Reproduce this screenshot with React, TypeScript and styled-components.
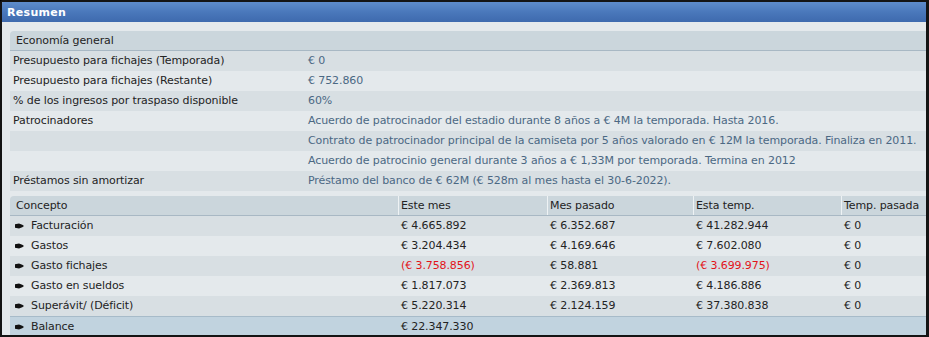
import { ReactElement } from "react";
import styled, { createGlobalStyle } from "styled-components";

const GlobalStyle = createGlobalStyle`
  html, body {
    margin: 0;
    padding: 0;
    background: #000;
  }
  * {
    box-sizing: border-box;
  }
`;

const Window = styled.div`
  width: 929px;
  height: 337px;
  overflow: hidden;
  background: #e4e9ec;
  border: 2px solid #141414;
  border-right-width: 3px;
  border-top-left-radius: 3px;
  font-family: "DejaVu Sans", Verdana, sans-serif;
  font-size: 11px;
  letter-spacing: -0.1px;
  color: #232323;
`;

const TitleBar = styled.div`
  height: 20px;
  line-height: 21px;
  padding-left: 5px;
  background: linear-gradient(to bottom, #5e8ccb 0%, #4a78bb 50%, #3e6aae 100%);
  color: #ffffff;
  font-size: 11px;
  font-weight: bold;
  letter-spacing: 0.3px;
`;

const Content = styled.div`
  padding: 9px 0 0 8px;
  display: flex;
  flex-direction: column;
  gap: 5px;
`;

const Panel = styled.div`
  display: flex;
  flex-direction: column;
`;

const PanelHeader = styled.div<{ $cols: string }>`
  display: grid;
  grid-template-columns: ${(p) => p.$cols};
  height: 20px;
  line-height: 19px;
  background: #cbd6dc;
  border-bottom: 1px solid #a8b8c4;
  border-top-left-radius: 4px;
`;

const HeaderCell = styled.div<{ $sep?: boolean }>`
  padding-left: ${(p) => (p.$sep ? "2px" : "6px")};
  border-left: ${(p) => (p.$sep ? "1px solid #eef2f4" : "none")};
  white-space: nowrap;
  overflow: hidden;
`;

const Row = styled.div<{ $cols: string; $shade: "dark" | "light" | "total" }>`
  display: grid;
  grid-template-columns: ${(p) => p.$cols};
  height: 20px;
  line-height: 20px;
  background: ${(p) =>
    p.$shade === "dark" ? "#d8dfe3" : p.$shade === "total" ? "#c1d3df" : "#e4e9ec"};
  border-top: ${(p) => (p.$shade === "total" ? "1px solid #a7bbc9" : "none")};
`;

const Label = styled.div`
  padding-left: 3px;
  white-space: nowrap;
  color: #232323;
`;

const InfoValue = styled.div`
  padding-left: 3px;
  white-space: nowrap;
  color: #4b6883;
`;

const Concept = styled.div`
  display: flex;
  align-items: center;
  gap: 7px;
  padding-left: 5px;
  white-space: nowrap;
`;

const Amount = styled.div<{ $neg?: boolean }>`
  padding-left: 3px;
  white-space: nowrap;
  color: ${(p) => (p.$neg ? "#e2141a" : "#232323")};
`;

const Bullet = () => (
  <svg width="9" height="6" viewBox="0 0 9 6">
    <path d="M0 1.2 L4 0.5 Q8 1.6 9 3 Q8 4.4 4 5.5 L0 4.8 Z" fill="#111" />
  </svg>
);

const infoCols = "295px 1fr";
const finCols = "388px 149px 146px 148px 1fr";

const info: [string, string][] = [
  ["Presupuesto para fichajes (Temporada)", "€ 0"],
  ["Presupuesto para fichajes (Restante)", "€ 752.860"],
  ["% de los ingresos por traspaso disponible", "60%"],
  ["Patrocinadores", "Acuerdo de patrocinador del estadio durante 8 años a € 4M la temporada. Hasta 2016."],
  ["", "Contrato de patrocinador principal de la camiseta por 5 años valorado en € 12M la temporada. Finaliza en 2011."],
  ["", "Acuerdo de patrocinio general durante 3 años a € 1,33M por temporada. Termina en 2012"],
  ["Préstamos sin amortizar", "Préstamo del banco de € 62M (€ 528m al mes hasta el 30-6-2022)."],
];

type FinRow = { name: string; values: string[]; total?: boolean };

const finance: FinRow[] = [
  { name: "Facturación", values: ["€ 4.665.892", "€ 6.352.687", "€ 41.282.944", "€ 0"] },
  { name: "Gastos", values: ["€ 3.204.434", "€ 4.169.646", "€ 7.602.080", "€ 0"] },
  { name: "Gasto fichajes", values: ["(€ 3.758.856)", "€ 58.881", "(€ 3.699.975)", "€ 0"] },
  { name: "Gasto en sueldos", values: ["€ 1.817.073", "€ 2.369.813", "€ 4.186.886", "€ 0"] },
  { name: "Superávit/ (Déficit)", values: ["€ 5.220.314", "€ 2.124.159", "€ 37.380.838", "€ 0"] },
  { name: "Balance", values: ["€ 22.347.330", "", "", ""], total: true },
];

export default function App(): ReactElement {
  return (
    <>
      <GlobalStyle />
      <Window>
        <TitleBar>Resumen</TitleBar>
        <Content>
          <Panel>
            <PanelHeader $cols="1fr">
              <HeaderCell>Economía general</HeaderCell>
            </PanelHeader>
            {info.map(([label, value], i) => (
              <Row key={i} $cols={infoCols} $shade={i % 2 === 0 ? "dark" : "light"}>
                <Label>{label}</Label>
                <InfoValue>{value}</InfoValue>
              </Row>
            ))}
          </Panel>
          <Panel>
            <PanelHeader $cols={finCols}>
              <HeaderCell>Concepto</HeaderCell>
              <HeaderCell $sep>Este mes</HeaderCell>
              <HeaderCell $sep>Mes pasado</HeaderCell>
              <HeaderCell $sep>Esta temp.</HeaderCell>
              <HeaderCell $sep>Temp. pasada</HeaderCell>
            </PanelHeader>
            {finance.map((row, i) => (
              <Row
                key={row.name}
                $cols={finCols}
                $shade={row.total ? "total" : i % 2 === 0 ? "dark" : "light"}
              >
                <Concept>
                  <Bullet />
                  {row.name}
                </Concept>
                {row.values.map((v, j) => (
                  <Amount key={j} $neg={v.startsWith("(")}>
                    {v}
                  </Amount>
                ))}
              </Row>
            ))}
          </Panel>
        </Content>
      </Window>
    </>
  );
}
